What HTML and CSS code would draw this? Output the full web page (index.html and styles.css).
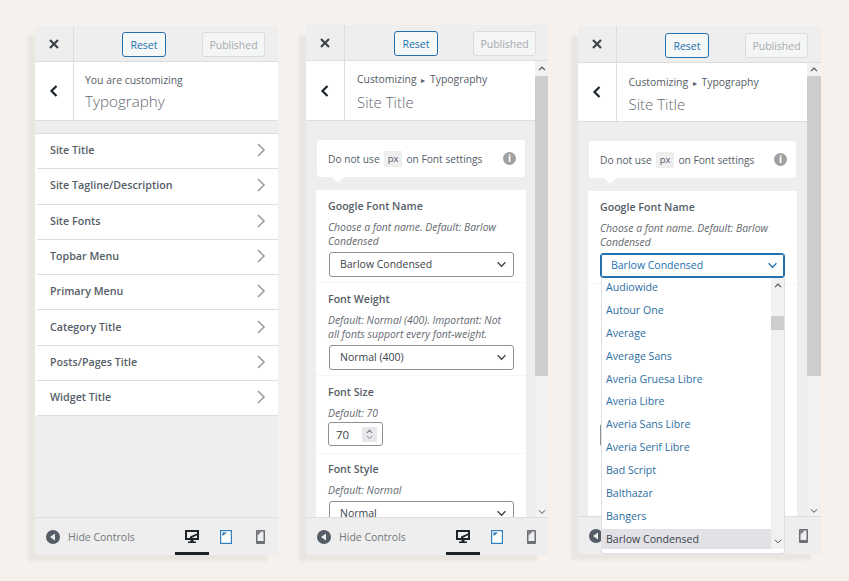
FILE: index.html
```html
<!DOCTYPE html>
<html lang="en">
<head>
    <meta charset="UTF-8">
    <meta name="viewport" content="width=device-width, initial-scale=1.0">
    <title>Typography Customizer</title>
    <link rel="stylesheet" href="styles.css">
</head>
<body>

    <svg class="defs" width="0" height="0">
        <symbol id="i-close" viewBox="0 0 12 12"><path d="M2 2l8 8M10 2l-8 8" fill="none" stroke="currentColor" stroke-width="2.2"/></symbol>
        <symbol id="i-back" viewBox="0 0 10 14"><path d="M7.5 2L2.5 7l5 5" fill="none" stroke="currentColor" stroke-width="2.2"/></symbol>
        <symbol id="i-next" viewBox="0 0 10 16"><path d="M2 2l6 6-6 6" fill="none" stroke="currentColor" stroke-width="1.6"/></symbol>
        <symbol id="i-down" viewBox="0 0 12 8"><path d="M1.500 1.500L6 6l4.500-4.500" fill="none" stroke="currentColor" stroke-width="1.500"/></symbol>
        <symbol id="i-up" viewBox="0 0 12 8"><path d="M1.500 6.500L6 2l4.500 4.500" fill="none" stroke="currentColor" stroke-width="1.800"/></symbol>
        <symbol id="i-hide" viewBox="0 0 14 14"><circle cx="7" cy="7" r="7" fill="currentColor"/><path d="M9 3.500v7L4 7z" fill="#eee"/></symbol>
        <symbol id="i-desktop" viewBox="0 0 14 13"><path d="M0 0h14v10H8.500v1.500H11V13H3v-1.500h2.500V10H0z" fill="currentColor"/><path d="M2 2h10v1.500L5 6.500v1.500H2z" fill="#eee"/><path d="M6.500 8L12 5.200V8z" fill="#eee"/></symbol>
        <symbol id="i-tablet" viewBox="0 0 12 14"><path d="M0 0h12v14H0z" fill="#2f7fc1"/><path d="M1.200 1.200h9.600v11.600H1.200z" fill="#fff"/><path d="M2.500 2.500h4.500L2.500 6z" fill="#2271b1"/></symbol>
        <symbol id="i-mobile" viewBox="0 0 9 14"><rect width="9" height="14" rx="1" fill="currentColor"/><path d="M1.500 1.500h6v9.500h-6z" fill="#eee"/><path d="M1.500 1.500h4l-4 4z" fill="currentColor"/></symbol>
    </svg>

    <div class="page">

        <!-- panel 1: section list -->
        <section class="panel panel-list">
            <div class="topbar">
                <div class="close-btn"><svg class="icon-close"><use href="#i-close"/></svg></div>
                <div class="top-actions">
                    <button class="btn-reset">Reset</button>
                    <button class="btn-published">Published</button>
                </div>
            </div>
            <div class="title-bar">
                <div class="back-btn"><svg class="icon-back"><use href="#i-back"/></svg></div>
                <div class="title-text">
                    <div class="crumb">You are customizing</div>
                    <div class="title">Typography</div>
                </div>
            </div>
            <ul class="menu">
                <li>Site Title<svg class="icon-next"><use href="#i-next"/></svg></li>
                <li>Site Tagline/Description<svg class="icon-next"><use href="#i-next"/></svg></li>
                <li>Site Fonts<svg class="icon-next"><use href="#i-next"/></svg></li>
                <li>Topbar Menu<svg class="icon-next"><use href="#i-next"/></svg></li>
                <li>Primary Menu<svg class="icon-next"><use href="#i-next"/></svg></li>
                <li>Category Title<svg class="icon-next"><use href="#i-next"/></svg></li>
                <li>Posts/Pages Title<svg class="icon-next"><use href="#i-next"/></svg></li>
                <li>Widget Title<svg class="icon-next"><use href="#i-next"/></svg></li>
            </ul>
            <div class="footer">
                <svg class="icon-hide"><use href="#i-hide"/></svg>
                <span class="hide-label">Hide Controls</span>
                <div class="devices">
                    <span class="device active"><svg class="icon-desktop"><use href="#i-desktop"/></svg></span>
                    <span class="device"><svg class="icon-tablet"><use href="#i-tablet"/></svg></span>
                    <span class="device"><svg class="icon-mobile"><use href="#i-mobile"/></svg></span>
                </div>
            </div>
        </section>

        <!-- panel 2: site title settings -->
        <section class="panel panel-form">
            <div class="topbar">
                <div class="close-btn"><svg class="icon-close"><use href="#i-close"/></svg></div>
                <div class="top-actions">
                    <button class="btn-reset">Reset</button>
                    <button class="btn-published">Published</button>
                </div>
            </div>
            <div class="scroll-area">
                <div class="scroll-content">
                    <div class="title-bar">
                        <div class="back-btn"><svg class="icon-back"><use href="#i-back"/></svg></div>
                        <div class="title-text">
                            <div class="crumb">Customizing <span class="sep">&#9656;</span> Typography</div>
                            <div class="title">Site Title</div>
                        </div>
                    </div>
                    <div class="notice">
                        <span>Do not use</span><code>px</code><span>on Font settings</span>
                        <span class="info">i</span>
                    </div>
                    <div class="controls">
                        <div class="control">
                            <div class="label">Google Font Name</div>
                            <div class="desc">Choose a font name. Default: Barlow Condensed</div>
                            <div class="select">Barlow Condensed<svg class="icon-down"><use href="#i-down"/></svg></div>
                        </div>
                        <div class="control">
                            <div class="label">Font Weight</div>
                            <div class="desc">Default: Normal (400). Important: Not all fonts support every font-weight.</div>
                            <div class="select">Normal (400)<svg class="icon-down"><use href="#i-down"/></svg></div>
                        </div>
                        <div class="control">
                            <div class="label">Font Size</div>
                            <div class="desc">Default: 70</div>
                            <div class="number">70<span class="spin"><svg class="icon-spin"><use href="#i-up"/></svg><svg class="icon-spin"><use href="#i-down"/></svg></span></div>
                        </div>
                        <div class="control">
                            <div class="label">Font Style</div>
                            <div class="desc">Default: Normal</div>
                            <div class="select">Normal<svg class="icon-down"><use href="#i-down"/></svg></div>
                        </div>
                    </div>
                </div>
                <div class="scrollbar">
                    <svg class="icon-arrow"><use href="#i-up"/></svg>
                    <div class="thumb"></div>
                    <svg class="icon-arrow arrow-bottom"><use href="#i-down"/></svg>
                </div>
            </div>
            <div class="footer">
                <svg class="icon-hide"><use href="#i-hide"/></svg>
                <span class="hide-label">Hide Controls</span>
                <div class="devices">
                    <span class="device active"><svg class="icon-desktop"><use href="#i-desktop"/></svg></span>
                    <span class="device"><svg class="icon-tablet"><use href="#i-tablet"/></svg></span>
                    <span class="device"><svg class="icon-mobile"><use href="#i-mobile"/></svg></span>
                </div>
            </div>
        </section>

        <!-- panel 3: font dropdown open -->
        <section class="panel panel-open">
            <div class="topbar">
                <div class="close-btn"><svg class="icon-close"><use href="#i-close"/></svg></div>
                <div class="top-actions">
                    <button class="btn-reset">Reset</button>
                    <button class="btn-published">Published</button>
                </div>
            </div>
            <div class="scroll-area">
                <div class="scroll-content">
                    <div class="title-bar">
                        <div class="back-btn"><svg class="icon-back"><use href="#i-back"/></svg></div>
                        <div class="title-text">
                            <div class="crumb">Customizing <span class="sep">&#9656;</span> Typography</div>
                            <div class="title">Site Title</div>
                        </div>
                    </div>
                    <div class="notice">
                        <span>Do not use</span><code>px</code><span>on Font settings</span>
                        <span class="info">i</span>
                    </div>
                    <div class="controls">
                        <div class="control">
                            <div class="label">Google Font Name</div>
                            <div class="desc">Choose a font name. Default: Barlow Condensed</div>
                            <div class="select focused">Barlow Condensed<svg class="icon-down"><use href="#i-down"/></svg></div>
                        </div>
                        <!-- the rest of the form sits behind the open list -->
                        <div class="control-behind">
                            <div class="number"></div>
                        </div>
                    </div>
                </div>
                <div class="scrollbar">
                    <svg class="icon-arrow"><use href="#i-up"/></svg>
                    <div class="thumb"></div>
                    <svg class="icon-arrow arrow-bottom"><use href="#i-down"/></svg>
                </div>
            </div>
            <div class="footer">
                <svg class="icon-hide"><use href="#i-hide"/></svg>
                <div class="devices">
                    <span class="device"><svg class="icon-mobile"><use href="#i-mobile"/></svg></span>
                </div>
            </div>
            <div class="dropdown">
                <ul class="options">
                    <li>Audiowide</li>
                    <li>Autour One</li>
                    <li>Average</li>
                    <li>Average Sans</li>
                    <li>Averia Gruesa Libre</li>
                    <li>Averia Libre</li>
                    <li>Averia Sans Libre</li>
                    <li>Averia Serif Libre</li>
                    <li>Bad Script</li>
                    <li>Balthazar</li>
                    <li>Bangers</li>
                    <li class="selected">Barlow Condensed</li>
                </ul>
                <div class="drop-scroll">
                    <svg class="icon-arrow"><use href="#i-up"/></svg>
                    <div class="drop-thumb"></div>
                    <svg class="icon-arrow arrow-bottom"><use href="#i-down"/></svg>
                </div>
            </div>
        </section>

    </div>

</body>
</html>
```

FILE: styles.css
```css
* {
    box-sizing: border-box;
}

body {
    margin: 0;
    background: #f6f1ec;
    font-family: "Open Sans", sans-serif;
    font-size: 11px;
    color: #555d66;
}

.defs {
    display: block;
    height: 0;
}

.page {
    display: flex;
    padding: 25px 0 0 35px;
    overflow: hidden;
    height: 581px;
}

.panel {
    position: relative;
    display: flex;
    flex-direction: column;
    width: 243px;
    height: 530px;
    background: #eeeeee;
    box-shadow: -9px 8px 3px -2px #e9e5e1;
}

.panel-list {
    margin-top: 1px;
    height: 529px;
}

.panel-form {
    margin-left: 28px;
    width: 242px;
}

.panel-open {
    margin-left: 30px;
    margin-top: 1px;
    height: 528px;
}

/* top bar */
.topbar {
    display: flex;
    height: 36px;
    flex: none;
    border-bottom: 1px solid #ddd;
}

.panel-open .topbar {
    height: 37px;
}

.close-btn {
    width: 39px;
    display: flex;
    align-items: center;
    justify-content: center;
    border-right: 1px solid #ddd;
    color: #3c434a;
}

.icon-close {
    width: 12px;
    height: 12px;
}

.top-actions {
    flex: 1;
    display: flex;
    align-items: center;
    justify-content: space-between;
    padding: 1px 13px 0 48px;
}

.panel-form .top-actions {
    padding: 1px 12px 0 49px;
}

.panel-open .top-actions {
    padding-top: 2px;
}

.top-actions button {
    font-family: inherit;
    font-size: 10.500px;
    height: 25px;
    border-radius: 3px;
    padding: 1px 0 0;
}

.btn-reset {
    width: 44px;
    background: #f6f7f7;
    color: #2271b1;
    border: 1px solid #2271b1;
}

.btn-published {
    width: 63px;
    background: #f4f5f5;
    color: #a7aaad;
    border: 1px solid #dcdcde;
}

/* title */
.title-bar {
    display: flex;
    height: 59px;
    background: #fff;
    border-bottom: 1px solid #ddd;
    flex: none;
}

.panel-form .title-bar {
    height: 60px;
}

.back-btn {
    width: 39px;
    display: flex;
    align-items: center;
    justify-content: center;
    border-right: 1px solid #ddd;
    color: #1d2327;
}

.icon-back {
    width: 10px;
    height: 14px;
}

.title-text {
    padding: 11px 0 0 11px;
}

.scroll-content .title-text {
    padding: 11px 0 0 12px;
}

.panel-open .scroll-content .title-text {
    padding: 12px 0 0 11.500px;
}

.crumb {
    font-size: 10.400px;
    line-height: 15px;
}

.sep {
    font-size: 8px;
    margin: 0 2px;
}

.title {
    margin-top: 2px;
    font-size: 15.200px;
    line-height: 22px;
    font-weight: 300;
    color: #646970;
}

.scroll-content .title {
    font-size: 15px;
    margin-top: 4px;
}

.panel-open .scroll-content .title {
    margin-top: 3px;
}

/* section list */
.menu {
    list-style: none;
    margin: 12px 0 0;
    padding: 0;
    background: #fff;
    border-top: 1px solid #ddd;
    flex: none;
}

.menu li {
    display: flex;
    align-items: center;
    justify-content: space-between;
    height: 35.300px;
    margin-left: 2px;
    padding: 0 12px 2px 13px;
    font-size: 10.700px;
    font-weight: 600;
    border-bottom: 1px solid #ddd;
}

.icon-next {
    width: 10px;
    height: 16px;
    color: #9a9da1;
}

/* footer */
.footer {
    margin-top: auto;
    position: relative;
    display: flex;
    align-items: center;
    flex: none;
    height: 38px;
    padding: 0 1px 0 11px;
    border-top: 1px solid #ddd;
    background: #eeeeee;
}

.panel-form .footer {
    padding-right: 0;
}

.icon-hide {
    width: 14px;
    height: 14px;
    color: #555d66;
    flex: none;
}

.hide-label {
    margin-left: 8px;
    font-size: 10.500px;
    color: #72777c;
}

.devices {
    margin-left: auto;
    display: flex;
    height: 100%;
}

.device {
    position: relative;
    width: 34px;
    display: flex;
    align-items: center;
    justify-content: center;
    color: #6c7075;
}

.device.active {
    color: #1d2327;
}

.device.active::after {
    content: "";
    position: absolute;
    left: 0;
    right: 0;
    bottom: 0;
    height: 3px;
    background: #1d2327;
}

.icon-desktop {
    width: 14px;
    height: 13px;
}

.icon-tablet {
    width: 12px;
    height: 14px;
}

.icon-mobile {
    width: 9px;
    height: 14px;
}

/* scrolling pane */
.scroll-area {
    flex: 1;
    display: flex;
    min-height: 0;
}

.scroll-content {
    flex: 1;
    min-width: 0;
    overflow: hidden;
}

.scrollbar {
    width: 13px;
    flex: none;
    display: flex;
    flex-direction: column;
    align-items: center;
    background: #f1f1f1;
}

.panel-open .scrollbar {
    width: 14px;
}

.thumb {
    width: 100%;
    height: 300px;
    background: #cdcdcd;
}

.icon-arrow {
    width: 8px;
    height: 15px;
    color: #505050;
    flex: none;
}

.panel-open .scrollbar .icon-arrow {
    height: 13px;
}

.scrollbar .arrow-bottom,
.panel-open .scrollbar .arrow-bottom {
    margin-top: auto;
    height: 10px;
}

.arrow-bottom {
    margin-top: auto;
}

.notice {
    position: relative;
    display: flex;
    align-items: center;
    gap: 4px;
    height: 37px;
    margin: 19px 10px 13px 11px;
    padding-left: 11px;
    background: #fff;
    border-radius: 3px;
    font-size: 10.200px;
}

.panel-open .notice {
    margin-right: 11px;
}

.notice::after {
    content: "";
    position: absolute;
    left: 15px;
    bottom: -6px;
    border-left: 6px solid transparent;
    border-right: 6px solid transparent;
    border-top: 6px solid #fff;
}

code {
    padding: 0 4px;
    line-height: 16px;
    background: #eeeeee;
    font-family: inherit;
    font-size: 9.500px;
}

.notice .info {
    position: absolute;
    right: 9px;
    top: 12px;
    width: 13px;
    height: 13px;
    border-radius: 50%;
    background: #a0a0a0;
    color: #fff;
    font-size: 10px;
    font-weight: 700;
    line-height: 13px;
    text-align: center;
}

/* form controls */
.controls {
    margin: 0 9px 0 10px;
    background: #fff;
}

.panel-open .controls {
    margin-right: 10px;
}

.control {
    padding: 8.500px 12px 5.500px 12px;
    border-bottom: 1px solid #f6f6f6;
}

.control-behind {
    height: 240px;
    padding: 140px 0 0 12px;
}

.label {
    font-weight: 600;
    font-size: 10.600px;
    line-height: 15px;
    margin-bottom: 6px;
}

.desc {
    font-size: 10.400px;
    font-style: italic;
    line-height: 14.500px;
    padding-right: 2px;
    color: #646970;
    margin-bottom: 3px;
}

.select {
    display: flex;
    align-items: center;
    justify-content: space-between;
    height: 25px;
    margin-left: 1px;
    padding: 0 6px 0 10px;
    border: 1px solid #8c8f94;
    border-radius: 3px;
    font-size: 10.500px;
    color: #3c434a;
    background: #fff;
}

.select.focused {
    border-color: #2271b1;
    box-shadow: inset 0 0 0 1px #2271b1;
    color: #2271b1;
    margin-left: 0;
}

.icon-down {
    width: 11px;
    height: 7px;
}

.number {
    display: flex;
    align-items: center;
    justify-content: space-between;
    width: 55px;
    height: 24px;
    margin: -1px 0 1px;
    padding: 0 5px 0 7px;
    border: 1px solid #8c8f94;
    border-radius: 3px;
    font-size: 11.500px;
    color: #3c434a;
}

.spin {
    display: flex;
    flex-direction: column;
    align-items: center;
    justify-content: center;
    width: 15px;
    height: 15px;
    gap: 1px;
    background: #e8e8ec;
}

.icon-spin {
    width: 7px;
    height: 5px;
    color: #777;
}

/* open dropdown */
.dropdown {
    position: absolute;
    left: 23px;
    top: 252px;
    width: 184px;
    height: 276px;
    display: flex;
    padding-bottom: 4px;
    background: #fff;
    border: 1px solid #e0e0e4;
    border-top: 0;
    border-radius: 0 0 3px 3px;
}

.options {
    list-style: none;
    flex: 1;
    margin: -1px 0 0;
    padding: 0;
    overflow: hidden;
}

.options li {
    height: 22.900px;
    line-height: 20px;
    padding-left: 4px;
    font-size: 10.600px;
    color: #2c6e9f;
}

.options li.selected {
    background: #e1e1e6;
    color: #3c434a;
}

.drop-scroll {
    width: 13px;
    flex: none;
    display: flex;
    flex-direction: column;
    align-items: center;
    background: #f1f1f1;
    position: relative;
}

.drop-thumb {
    position: absolute;
    top: 38px;
    left: 0;
    width: 100%;
    height: 14px;
    background: #cdcdcd;
}
```
